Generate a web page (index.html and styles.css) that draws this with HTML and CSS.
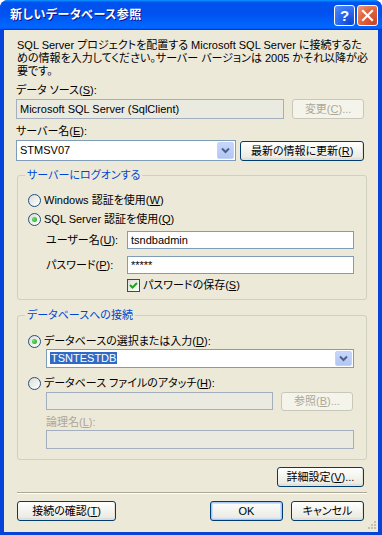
FILE: index.html
```html
<!DOCTYPE html>
<html lang="ja">
<head>
  <meta charset="UTF-8">
  <title>新しいデータベース参照</title>
  <link rel="stylesheet" href="styles.css">
</head>
<body>

<div class="window">
  <div class="titlebar">
    <span class="title">新しいデータベース参照</span>
    <div class="caption-btns">
      <span class="cbtn help">?</span>
      <span class="cbtn close">
        <svg width="13" height="13" viewBox="0 0 13 13"><path d="M2 2 L11 11 M11 2 L2 11" stroke="#fff" stroke-width="2.2" stroke-linecap="square"/></svg>
      </span>
    </div>
  </div>

  <div class="client">
    <p class="desc">SQL Server プロジェクトを配置する Microsoft SQL Server に接続するた<br>めの情報を入力してください。サーバー バージョンは 2005 かそれ以降が必<br>要です。</p>

    <div class="label">データ ソース(<u>S</u>):</div>
    <div class="row">
      <div class="textbox disabled w-source">Microsoft SQL Server (SqlClient)</div>
      <button class="btn disabled w-change">変更(<u>C</u>)...</button>
    </div>

    <div class="label">サーバー名(<u>E</u>):</div>
    <div class="row">
      <div class="combo w-server">
        <span class="combo-text">STMSV07</span>
        <span class="drop"><svg width="9" height="7" viewBox="0 0 9 7"><path d="M1 1.5 L4.5 5 L8 1.5" fill="none" stroke="#4D6185" stroke-width="2"/></svg></span>
      </div>
      <button class="btn w-refresh">最新の情報に更新(<u>R</u>)</button>
    </div>

    <div class="group g-logon">
      <span class="group-title">サーバーにログオンする</span>
      <div class="opt first"><span class="radio"></span>Windows 認証を使用(<u>W</u>)</div>
      <div class="opt second"><span class="radio checked"></span>SQL Server 認証を使用(<u>Q</u>)</div>
      <div class="field user">
        <span class="flabel">ユーザー名(<u>U</u>):</span>
        <div class="textbox w-cred">tsndbadmin</div>
      </div>
      <div class="field pass">
        <span class="flabel">パスワード(<u>P</u>):</span>
        <div class="textbox w-cred">*****</div>
      </div>
      <div class="check-row">
        <span class="checkbox"><svg width="11" height="11" viewBox="0 0 11 11"><path d="M2 5 L4.5 7.5 L9 3" fill="none" stroke="#21A121" stroke-width="2"/></svg></span>パスワードの保存(<u>S</u>)
      </div>
    </div>

    <div class="group g-db">
      <span class="group-title">データベースへの接続</span>
      <div class="opt first"><span class="radio checked"></span>データベースの選択または入力(<u>D</u>):</div>
      <div class="combo w-db">
        <span class="combo-text"><span class="selected">TSNTESTDB</span></span>
        <span class="drop"><svg width="9" height="7" viewBox="0 0 9 7"><path d="M1 1.5 L4.5 5 L8 1.5" fill="none" stroke="#4D6185" stroke-width="2"/></svg></span>
      </div>
      <div class="opt attach"><span class="radio"></span>データベース ファイルのアタッチ(<u>H</u>):</div>
      <div class="row indent">
        <div class="textbox disabled w-file"></div>
        <button class="btn disabled w-browse">参照(<u>B</u>)...</button>
      </div>
      <div class="label indent dim">論理名(<u>L</u>):</div>
      <div class="textbox disabled w-logical indent"></div>
    </div>

    <div class="adv-row">
      <button class="btn w-adv">詳細設定(<u>V</u>)...</button>
    </div>

    <div class="separator"></div>

    <div class="footer">
      <button class="btn w-test">接続の確認(<u>T</u>)</button>
      <div class="footer-right">
        <button class="btn default w-ok">OK</button>
        <button class="btn w-cancel">キャンセル</button>
      </div>
    </div>
    <div class="grip">
      <svg width="11" height="11" viewBox="0 0 11 11" fill="#C3C0B0">
        <rect x="8" y="0" width="2" height="2"/>
        <rect x="5" y="3" width="2" height="2"/><rect x="8" y="3" width="2" height="2"/>
        <rect x="2" y="6" width="2" height="2"/><rect x="5" y="6" width="2" height="2"/><rect x="8" y="6" width="2" height="2"/>
      </svg>
    </div>
  </div>
</div>

</body>
</html>
```

FILE: styles.css
```css
* { box-sizing: border-box; }
body { margin: 0; background: #fff; font-family: "Liberation Sans", "Noto Sans CJK JP", sans-serif; font-size: 11px; line-height: 13px; color: #000; font-feature-settings: "palt"; }
u { text-decoration: underline; text-underline-offset: 1px; }

.window { width: 382px; height: 535px; background: #0842D6; border-radius: 8px 8px 0 0; display: flex; flex-direction: column; overflow: hidden; }
.titlebar { height: 30px; flex: none; display: flex; align-items: center; justify-content: space-between; padding: 0 4px 0 10px; background: linear-gradient(#0997ff, #0053ee 8%, #0050ee 40%, #0066ff 88%, #0066ff 93%, #005bff 95%, #003dd7 96%, #003dd7); }
.title { color: #fff; font-weight: bold; font-size: 12px; text-shadow: 1px 1px #0F1089; letter-spacing: 0.5px; }
.caption-btns { display: flex; gap: 2px; }
.cbtn { width: 21px; height: 21px; border: 1px solid #fff; border-radius: 3px; display: flex; align-items: center; justify-content: center; color: #fff; font-weight: bold; font-size: 15px; font-family: "Liberation Sans", sans-serif; }
.help { background: radial-gradient(circle at 80% 90%, #0F45D3 0%, #2D6CF0 55%, #5A8EF7 100%); }
.close { background: radial-gradient(circle at 85% 90%, #CC4628 0%, #E0623C 55%, #F09C7E 100%); }

.client { flex: 1; margin: 0 4px 3px 4px; background: #ECE9D8; padding: 0 14px 0 12px; display: flex; flex-direction: column; }
.desc { margin: 9px 0 0 1px; line-height: 13px; white-space: nowrap; }
.label { margin-top: 6px; line-height: 13px; white-space: nowrap; }
.row { display: flex; align-items: flex-start; margin-top: 2px; }

.textbox { height: 20px; background: #fff; border: 1px solid #7F9DB9; padding: 0 3px; line-height: 18px; white-space: nowrap; }
.textbox.disabled { background: #EBEAE0; border-color: #A3AFBC; }
.w-source { width: 269px; }
.w-change { width: 72px; margin-left: 8px; }

.combo { height: 21px; border: 1px solid #7F9DB9; background: #fff; display: flex; align-items: center; justify-content: space-between; padding: 1px; }
.combo-text { padding-left: 2px; line-height: 17px; }
.drop { width: 17px; height: 17px; border: 1px solid #C4D3F6; border-radius: 2px; background: linear-gradient(#C6D6FC, #B2C6F4); display: flex; align-items: center; justify-content: center; }
.w-server { width: 221px; }
.w-refresh { width: 124px; margin-left: 4px; margin-top: 1px; height: 21px; }

.btn { height: 20px; border: 1px solid #003C74; border-radius: 3px; background: linear-gradient(#FFFFFF, #F4F4F0 45%, #ECEBE4 85%, #D6D0C5); font: inherit; color: #000; padding: 0; line-height: 17px; white-space: nowrap; box-shadow: inset -1px -1px 0 #E3E1D6; }
.btn.disabled { border-color: #C9C7BA; background: #F5F4EA; color: #ACA899; box-shadow: none; }
.btn.default { box-shadow: inset 0 0 0 1px #A8C6F2, inset 0 0 0 2px #CEE0FA; }

.group { width: 350px; margin-left: 1px; border: 1px solid #D0D0BF; border-radius: 3px; padding: 0 0 0 10px; display: flex; flex-direction: column; align-items: flex-start; }
.group-title { margin: -7px 0 0 -3px; padding: 0 2px; background: #ECE9D8; color: #0046D5; line-height: 13px; }
.g-logon { margin-top: 14px; padding-bottom: 7px; }
.g-db { margin-top: 15px; padding-bottom: 10px; }

.opt { display: flex; align-items: center; height: 16px; white-space: nowrap; }
.g-logon .opt.first { margin-top: 10px; }
.g-logon .opt.second { margin-top: 3px; }
.g-db .opt.first { margin-top: 11px; }
.opt.attach { margin-top: 7px; }

.radio { width: 13px; height: 13px; border: 1px solid #1C5180; border-radius: 50%; background: linear-gradient(135deg, #DCDCD7, #FFFFFF); margin-right: 3px; display: flex; align-items: center; justify-content: center; }
.radio.checked::after { content: ""; width: 5px; height: 5px; border-radius: 50%; background: radial-gradient(circle at 35% 35%, #6BE26A, #21A121); }

.field { display: flex; align-items: center; margin-left: 18px; }
.field.user { margin-top: 4px; }
.field.pass { margin-top: 7px; }
.flabel { width: 81px; line-height: 13px; white-space: nowrap; }
.w-cred { width: 227px; height: 18px; line-height: 16px; }

.check-row { display: flex; align-items: center; margin: 5px 0 0 99px; line-height: 13px; white-space: nowrap; }
.checkbox { width: 13px; height: 13px; border: 1px solid #1C5180; background: linear-gradient(135deg, #DCDCD7, #FFFFFF); margin-right: 3px; display: flex; align-items: center; justify-content: center; }

.indent { margin-left: 18px; }
.w-db { width: 308px; height: 19px; margin-left: 18px; }
.w-db .drop { height: 15px; }
.selected { background: #316AC5; color: #fff; padding: 0 1px; }
.row.indent { margin-top: 1px; }
.w-file { width: 227px; height: 18px; }
.w-browse { width: 72px; height: 19px; margin-left: 8px; }
.label.dim { color: #ACA899; margin-top: 5px; }
.w-logical { width: 308px; height: 19px; margin-top: 1px; }

.adv-row { display: flex; justify-content: flex-end; margin-top: 7px; }
.w-adv { width: 87px; }
.separator { margin: 5px 0 0 1px; width: 350px; height: 2px; border-top: 1px solid #ACA899; border-bottom: 1px solid #fff; }
.footer { display: flex; justify-content: space-between; margin-top: 7px; padding-left: 1px; }
.footer-right { display: flex; gap: 8px; }
.w-test { width: 99px; }
.w-ok { width: 73px; }
.w-cancel { width: 73px; }
.grip { display: flex; justify-content: flex-end; margin: 0 -13px 0 0; }
```
